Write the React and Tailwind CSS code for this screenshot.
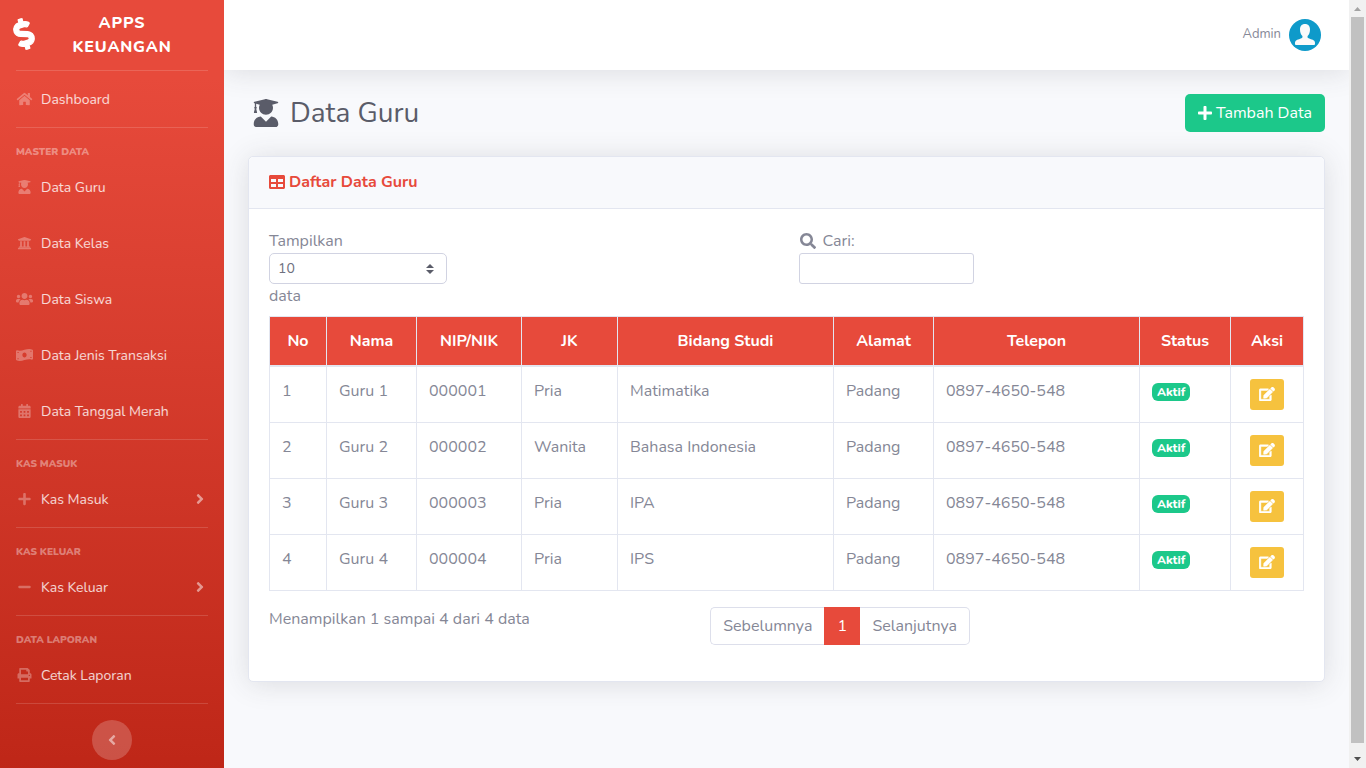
import { useState } from 'react'
import {
  FaAngleLeft,
  FaAngleRight,
  FaCalendarAlt,
  FaDollarSign,
  FaEdit,
  FaHome,
  FaMinus,
  FaPlus,
  FaSearch,
  FaTable,
  FaUniversity,
  FaUserGraduate,
  FaUsers,
} from 'react-icons/fa'

function MoneyIcon({ className }) {
  return (
    <svg viewBox="0 0 640 512" fill="currentColor" className={className}>
      <path
        fillRule="evenodd"
        d="M621 54C582 38 544 32 505 32 382 32 258 94 135 94c-31 0-62-4-93-14C20 74 0 90 0 111v317c0 13 7 25 19 30 39 16 77 22 116 22 123 0 247-62 370-62 31 0 62 4 93 14 22 6 42-10 42-31V84c0-13-7-25-19-30zM320 352c-44 0-80-43-80-96s36-96 80-96 80 43 80 96-36 96-80 96zM56 140h44v40H56zM540 92h44v40h-44zM56 380h44v40H56zM540 332h44v40h-44z"
      />
    </svg>
  )
}

function PrintIcon({ className }) {
  return (
    <svg viewBox="0 0 512 512" fill="currentColor" className={className}>
      <path d="M464 192h-16V82a24 24 0 0 0-7-17L383 7a24 24 0 0 0-17-7H88C75 0 64 11 64 24v168H48c-27 0-48 21-48 48v132c0 7 5 12 12 12h52v104c0 13 11 24 24 24h336c13 0 24-11 24-24V384h52c7 0 12-5 12-12V240c0-27-21-48-48-48zm-80 256H128v-96h256v96zM384 224H128V64h192v48c0 9 7 16 16 16h48v96zm48 72c-13 0-24-11-24-24s11-24 24-24 24 11 24 24-11 24-24 24z" />
    </svg>
  )
}

const menu = [
  { items: [{ label: 'Dashboard', icon: FaHome }] },
  {
    heading: 'Master Data',
    items: [
      { label: 'Data Guru', icon: FaUserGraduate },
      { label: 'Data Kelas', icon: FaUniversity },
      { label: 'Data Siswa', icon: FaUsers },
      { label: 'Data Jenis Transaksi', icon: MoneyIcon },
      { label: 'Data Tanggal Merah', icon: FaCalendarAlt },
    ],
  },
  { heading: 'Kas Masuk', items: [{ label: 'Kas Masuk', icon: FaPlus, sub: true }] },
  { heading: 'Kas Keluar', items: [{ label: 'Kas Keluar', icon: FaMinus, sub: true }] },
  { heading: 'Data Laporan', items: [{ label: 'Cetak Laporan', icon: PrintIcon }] },
]

const columns = [
  { title: 'No', width: 'w-[57px]' },
  { title: 'Nama', width: 'w-[90px]' },
  { title: 'NIP/NIK', width: 'w-[105px]' },
  { title: 'JK', width: 'w-[96px]' },
  { title: 'Bidang Studi', width: 'w-[216px]' },
  { title: 'Alamat', width: 'w-[100px]' },
  { title: 'Telepon', width: 'w-[206px]' },
  { title: 'Status', width: 'w-[91px]' },
  { title: 'Aksi', width: 'w-[73px]' },
]

const teachers = [
  { nama: 'Guru 1', nip: '000001', jk: 'Pria', bidang: 'Matimatika', alamat: 'Padang', telepon: '0897-4650-548' },
  { nama: 'Guru 2', nip: '000002', jk: 'Wanita', bidang: 'Bahasa Indonesia', alamat: 'Padang', telepon: '0897-4650-548' },
  { nama: 'Guru 3', nip: '000003', jk: 'Pria', bidang: 'IPA', alamat: 'Padang', telepon: '0897-4650-548' },
  { nama: 'Guru 4', nip: '000004', jk: 'Pria', bidang: 'IPS', alamat: 'Padang', telepon: '0897-4650-548' },
]

function Sidebar() {
  return (
    <nav className="relative z-10 w-56 shrink-0 bg-linear-to-b from-[#e74a3b] from-10% to-[#be2617]">
      <a href="#" className="flex h-[70px] items-center pl-3 text-white">
        <FaDollarSign className="mb-0.5 h-8 w-6 shrink-0 -rotate-[15deg] stroke-[20]" />
        <span className="ml-4 mr-8 flex-1 px-4 text-center text-base font-extrabold uppercase leading-6 tracking-wider">
          Apps Keuangan
        </span>
      </a>
      {menu.map((group) => (
        <div key={group.items[0].label}>
          <hr className="mx-4 border-white/15" />
          {group.heading && (
            <div className="px-4 pt-4 text-[10px] font-black uppercase leading-[15px] text-white/40">
              <span className="block pt-px leading-[14px]">{group.heading}</span>
            </div>
          )}
          <ul>
            {group.items.map(({ label, icon: Icon, sub }) => (
              <li key={label}>
                <a href="#" className="flex h-14 items-center gap-2 px-4 pt-0.5 text-sm text-white/80">
                  <Icon className="mb-0.5 h-[14px] w-[17px] shrink-0 text-white/30" />
                  {label}
                  {sub && <FaAngleRight className="mb-0.5 ml-auto size-4 text-white/50" />}
                </a>
              </li>
            ))}
          </ul>
        </div>
      ))}
      <hr className="mx-4 border-white/15" />
      <div className="flex justify-center py-4">
        <button type="button" aria-label="Toggle sidebar" className="grid size-10 place-items-center rounded-full bg-white/20 text-white/50">
          <FaAngleLeft className="size-4" />
        </button>
      </div>
    </nav>
  )
}

function Topbar() {
  return (
    <header className="flex h-[70px] items-center justify-end bg-white pr-7 shadow-[0_2px_28px_0_rgba(58,59,69,0.15)]">
      <a href="#" className="flex items-center gap-2 text-[13px] text-[#858796]">
        Admin
        <svg viewBox="0 0 32 32" className="size-8">
          <circle cx="16" cy="16" r="16" fill="#0e9aca" />
          <path
            fill="#fafafa"
            d="M16 5c3.300 0 5 2.200 5 5.400 0 2.700-.9 5-2.200 6.400-.4.500-.4 1.900.2 2.300 1.200.8 4.600 1.400 6.200 2.600.8.700.9 2.300.8 3.200-.1.700-.5 1.100-1.300 1.100H7.300c-.8 0-1.200-.4-1.300-1.100-.1-.9 0-2.500.8-3.200 1.600-1.200 5-1.800 6.200-2.600.6-.4.6-1.800.2-2.300C11.900 15.400 11 13.100 11 10.400 11 7.200 12.700 5 16 5z"
          />
        </svg>
      </a>
    </header>
  )
}

function TeacherTable() {
  return (
    <table className="w-full table-fixed border-collapse">
      <thead>
        <tr className="bg-[#e74a3b] text-white">
          {columns.map((col) => (
            <th key={col.title} className={`${col.width} h-[49px] border border-b-2 border-[#e3e6f0] font-bold`}>
              {col.title}
            </th>
          ))}
        </tr>
      </thead>
      <tbody>
        {teachers.map((t, i) => (
          <tr key={t.nip} className="h-14 align-top first:h-[57px]">
            {[i + 1, t.nama, t.nip, t.jk, t.bidang, t.alamat, t.telepon].map((value, n) => (
              <td key={n} className="border border-[#e3e6f0] p-3">{value}</td>
            ))}
            <td className="border border-[#e3e6f0] p-3">
              <span className="mt-1 inline-block h-[18px] rounded-md bg-[#1cc88a] px-[5px] align-top text-xs font-extrabold leading-[18px] text-white">
                Aktif
              </span>
            </td>
            <td className="border border-[#e3e6f0] px-3 pt-3 text-center">
              <button type="button" aria-label={`Edit ${t.nama}`} className="inline-grid h-[31px] w-[34px] place-items-center rounded-[3px] bg-[#f6c23e] pb-px align-top text-white">
                <FaEdit className="h-[14px] w-4 stroke-[16]" />
              </button>
            </td>
          </tr>
        ))}
      </tbody>
    </table>
  )
}

// Custom scrollbar track beside the page
function Scrollbar() {
  return (
    <div className="flex w-[17px] shrink-0 flex-col items-center bg-[#f1f1f1]">
      <svg viewBox="0 0 17 17" className="size-[17px] shrink-0">
        <path d="M5 11h7L8.500 7z" fill="#a3a3a3" />
      </svg>
      <div className="w-[13px] flex-1 bg-[#c1c1c1]" />
      <svg viewBox="0 0 17 17" className="mt-2 size-[17px] shrink-0">
        <path d="M5 6h7L8.500 10z" fill="#505050" />
      </svg>
    </div>
  )
}

function App() {
  const [length, setLength] = useState('10')
  const [search, setSearch] = useState('')

  return (
    <div className="flex h-screen overflow-hidden font-['Nunito','Lato',sans-serif] text-base text-[#858796]">
      <div className="flex-1 overflow-y-auto [scrollbar-width:none]">
        <div className="flex min-h-full">
          <Sidebar />
          <div className="min-w-0 flex-1 bg-[#f8f9fc]">
            <Topbar />
            <main className="p-6">
              <div className="mb-6 flex items-center justify-between">
                <h1 className="flex items-center gap-[10px] text-[28px] leading-[34px] text-[#5a5c69]">
                  <FaUserGraduate className="ml-1 size-7" />
                  Data Guru
                </h1>
                <button type="button" className="flex h-[38px] w-[140px] items-center gap-[3px] rounded-[5px] bg-[#1cc88a] px-3 text-white">
                  <FaPlus className="size-4" />
                  Tambah Data
                </button>
              </div>

              <section className="rounded-[5px] border border-[#e3e6f0] bg-white shadow-[0_2px_28px_0_rgba(58,59,69,0.15)]">
                <h2 className="flex h-[52px] items-center gap-1 rounded-t-[5px] border-b border-[#e3e6f0] bg-[#f8f9fc] px-5 pb-0.5 font-bold text-[#e74a3b]">
                  <FaTable className="size-4" />
                  Daftar Data Guru
                </h2>
                <div className="p-5">
                  <div className="mb-2 grid grid-cols-2 gap-6">
                    <label className="block w-[178px]">
                      Tampilkan
                      <span className="relative block">
                        <select
                          value={length}
                          onChange={(e) => setLength(e.target.value)}
                          className="block h-[31px] w-full appearance-none rounded-[5px] border border-[#d1d3e2] bg-white px-2 text-sm text-[#6e707e]"
                        >
                          <option>10</option>
                          <option>25</option>
                          <option>50</option>
                          <option>100</option>
                        </select>
                        <svg viewBox="0 0 8 10" className="pointer-events-none absolute right-[13px] top-[11px] h-[10px] w-2">
                          <path d="M4 0 0 4h8zM4 10 0 6h8z" fill="#5a5c69" />
                        </svg>
                      </span>
                      data
                    </label>
                    <label className="block w-[175px]">
                      <span className="flex items-center gap-[7px]">
                        <FaSearch className="ml-px size-4" />
                        Cari:
                      </span>
                      <input
                        type="search"
                        value={search}
                        onChange={(e) => setSearch(e.target.value)}
                        className="block h-[31px] w-full rounded-[3px] border border-[#d1d3e2] bg-white px-2 text-sm"
                      />
                    </label>
                  </div>

                  <TeacherTable />

                  <div className="mt-4 mb-4 grid grid-cols-12 gap-6">
                    <p className="col-span-5">Menampilkan 1 sampai 4 dari 4 data</p>
                    <div className="col-span-7 flex h-[38px]">
                      <button type="button" className="rounded-l-[5px] border border-r-0 border-[#dddfeb] px-3">Sebelumnya</button>
                      <button type="button" className="w-9 bg-[#e74a3b] text-white">1</button>
                      <button type="button" className="rounded-r-[5px] border border-l-0 border-[#dddfeb] px-3">Selanjutnya</button>
                    </div>
                  </div>
                </div>
              </section>
            </main>
          </div>
        </div>
      </div>
      <Scrollbar />
    </div>
  )
}

export default App
